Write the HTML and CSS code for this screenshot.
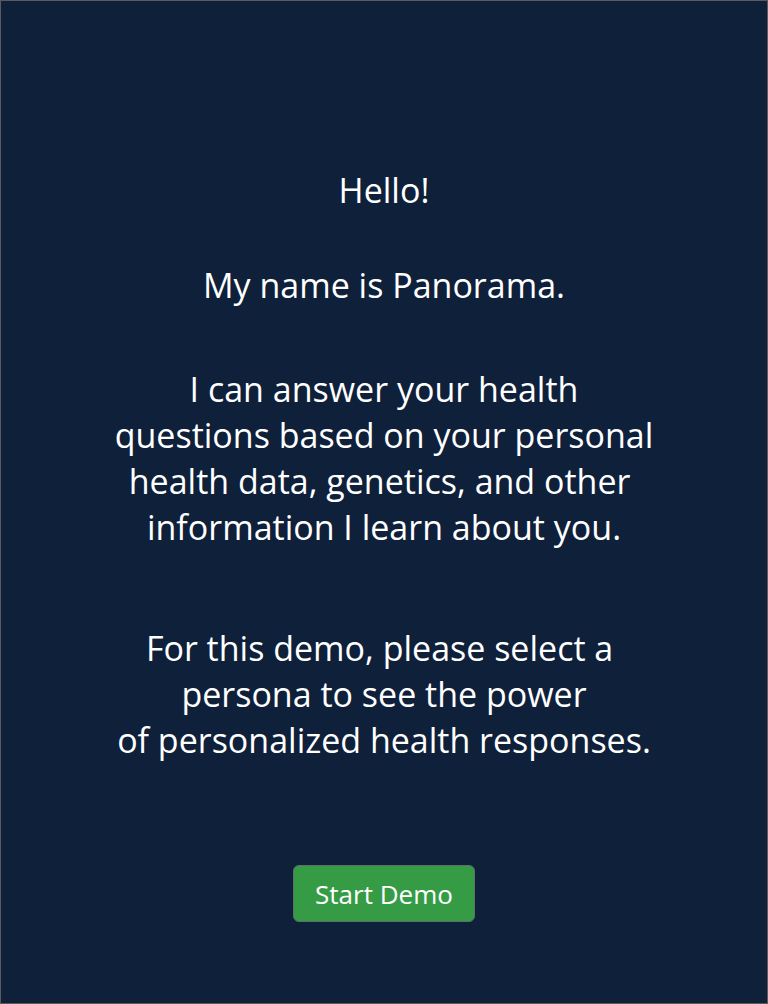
FILE: index.html
```html
<!DOCTYPE html>
<html>
<head>
<meta charset="utf-8">
<link rel="stylesheet" href="styles.css">
</head>
<body>
<main class="screen">
  <p class="msg msg-hello">Hello!</p>
  <p class="msg msg-name">My name is Panorama.</p>
  <p class="msg msg-about">I can answer your health<br>questions based on your personal<br>health data, genetics, and other&nbsp;<br>information I learn about you.</p>
  <p class="msg msg-demo">For this demo, please select a&nbsp;<br>persona to see the power<br>of personalized health responses.</p>
  <button class="start-btn" type="button">Start Demo</button>
</main>
</body>
</html>
```
FILE: styles.css
```css
html, body {
  margin: 0;
  padding: 0;
}
body {
  width: 768px;
  height: 1004px;
  overflow: hidden;
}
.screen {
  box-sizing: border-box;
  width: 768px;
  height: 1004px;
  background: #0f203a;
  border: 1px solid #5a5a5a;
  display: flex;
  flex-direction: column;
  align-items: center;
  font-family: "Open Sans", "Noto Sans", sans-serif;
  color: #ffffff;
  text-align: center;
}
.msg {
  margin: 0;
  font-size: 34px;
  line-height: 46px;
}
.msg-hello {
  margin-top: 166px;
}
.msg-name {
  margin-top: 49px;
}
.msg-about {
  margin-top: 58px;
}
.msg-demo {
  margin-top: 75px;
}
.start-btn {
  margin-top: 102px;
  width: 182px;
  height: 57px;
  box-sizing: border-box;
  background: #359c45;
  border: 1px solid #5e6e68;
  border-radius: 6px;
  color: #ffffff;
  font-family: "Open Sans", "Noto Sans", sans-serif;
  font-size: 26px;
  padding: 0;
}
```
